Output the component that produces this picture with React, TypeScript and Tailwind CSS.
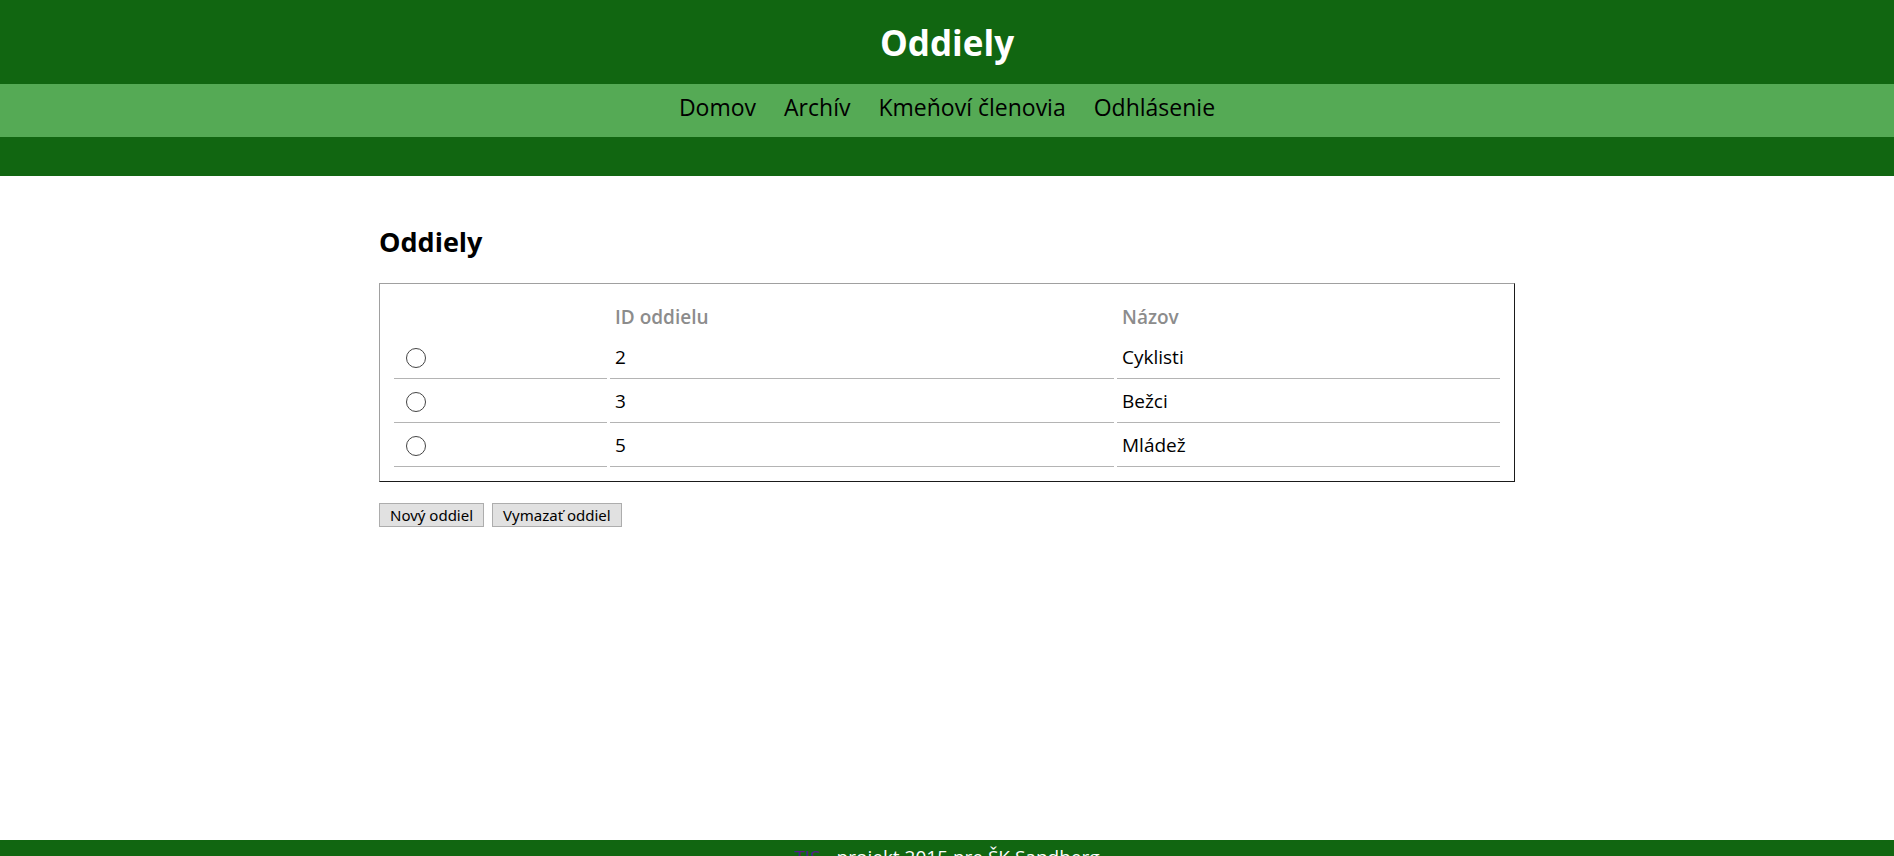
const links = ['Domov', 'Archív', 'Kmeňoví členovia', 'Odhlásenie'];

const rows = [
  { id: 2, name: 'Cyklisti' },
  { id: 3, name: 'Bežci' },
  { id: 5, name: 'Mládež' },
];

export default function App() {
  return (
    <div className="min-h-screen bg-white font-['Open_Sans',sans-serif] text-black">
      {/* hlavicka */}
      <header className="bg-[#116611]">
        <div className="h-[84px] pt-[23px] text-center">
          <h1 className="text-[35px] leading-[40px] font-bold text-white">Oddiely</h1>
        </div>
        <nav className="h-[53px] bg-[#55aa55] flex justify-center gap-[28px]">
          {links.map((l) => (
            <a key={l} href="#" className="text-[23px] leading-[46px] text-black">
              {l}
            </a>
          ))}
        </nav>
        <div className="h-[39px]" />
      </header>

      <main className="min-h-[664px] pt-[50px]">
        <div className="w-[1136px] mx-auto">
          <h2 className="text-[27px] leading-[32px] font-bold">Oddiely</h2>

          <div className="mt-[25px] border border-t-[#a0a0a0] border-l-[#a0a0a0] border-r-[#1a1a1a] border-b-[#1a1a1a] p-[11px]">
            <table className="w-full table-fixed border-separate border-spacing-[3px] text-[19px]">
              <colgroup>
                <col className="w-[213px]" />
                <col className="w-[504px]" />
                <col />
              </colgroup>
              <thead>
                <tr>
                  <th className="h-[37px]" />
                  <th className="h-[37px] px-[5px] pb-[6px] align-bottom text-left font-semibold leading-[24px] text-[#8c8c8c]">
                    ID oddielu
                  </th>
                  <th className="h-[37px] px-[5px] pb-[6px] align-bottom text-left font-semibold leading-[24px] text-[#8c8c8c]">
                    Názov
                  </th>
                </tr>
              </thead>
              <tbody>
                {rows.map((r) => (
                  <tr key={r.id}>
                    <td className="h-[41px] border-b border-[#b4b4b4] align-middle">
                      <input
                        type="radio"
                        name="oddiel"
                        className="appearance-none block ml-[12px] w-[20px] h-[20px] rounded-full border border-[#444] bg-white"
                      />
                    </td>
                    <td className="h-[41px] px-[5px] pb-[2px] border-b border-[#b4b4b4] align-middle font-medium leading-[24px]">
                      {r.id}
                    </td>
                    <td className="h-[41px] px-[5px] pb-[2px] border-b border-[#b4b4b4] align-middle font-medium leading-[24px]">
                      {r.name}
                    </td>
                  </tr>
                ))}
              </tbody>
            </table>
          </div>

          <div className="mt-[21px] flex gap-[8px]">
            <button className="h-[24px] px-[10px] bg-[#e1e1e1] border border-[#adadad] text-[15px] leading-[20px] font-['Noto_Sans',sans-serif]">
              Nový oddiel
            </button>
            <button className="h-[24px] px-[10px] bg-[#e1e1e1] border border-[#adadad] text-[15px] leading-[20px] font-['Noto_Sans',sans-serif]">
              Vymazať oddiel
            </button>
          </div>
        </div>
      </main>

      <footer className="bg-[#116611] pt-[5px] pb-[6px] text-center text-[19px] leading-[24px] text-white">
        <a href="#" className="text-[#551a8b]">TIS</a> - projekt 2015 pre ŠK Sandberg
      </footer>
    </div>
  );
}
